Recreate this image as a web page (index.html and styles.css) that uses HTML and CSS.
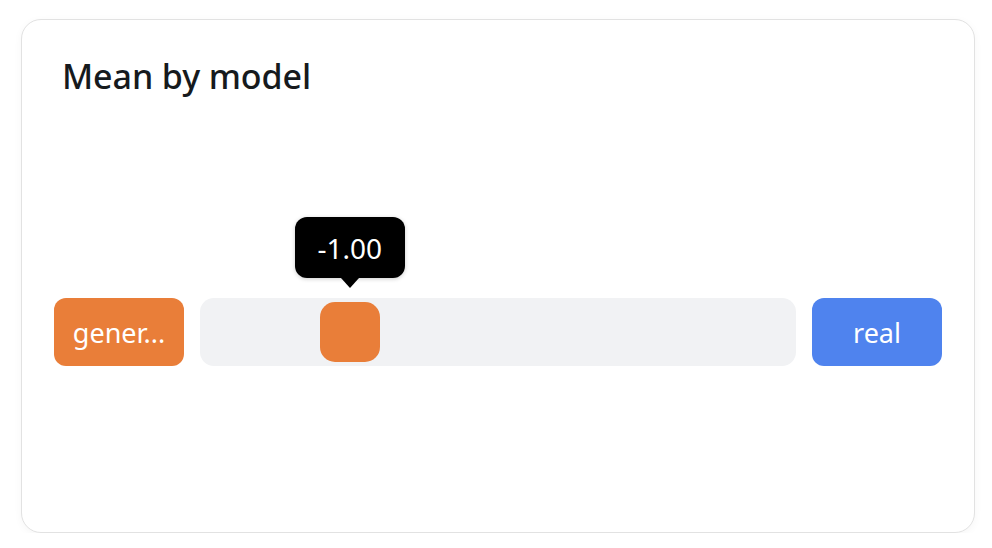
FILE: index.html
```html
<!DOCTYPE html>
<html lang="en">
<head>
    <meta charset="UTF-8">
    <meta name="viewport" content="width=device-width, initial-scale=1.0">
    <title>Mean by model</title>
    <link rel="stylesheet" href="styles.css">
</head>
<body>
    <div class="card">
        <h2 class="card-title">Mean by model</h2>

        <div class="chart">
            <div class="model-row">
                <div class="model-label generated" title="generated">gener...</div>
                <div class="slider-track">
                    <div class="slider-handle" style="left: 20.1%">
                        <div class="tooltip">-1.00</div>
                    </div>
                </div>
                <div class="model-label real">real</div>
            </div>
        </div>
    </div>
</body>
</html>
```

FILE: styles.css
```css
* {
    margin: 0;
    padding: 0;
    box-sizing: border-box;
    font-family: "Noto Sans", "Open Sans", sans-serif;
}

body {
    background-color: #ffffff;
    padding: 19px 17px 0 21px;
}

.card {
    height: 514px;
    background-color: #fff;
    border: 1.5px solid #e2e2e2;
    border-radius: 20px;
    box-shadow: 0 2px 8px rgba(0, 0, 0, 0.04);
    padding: 32px;
}

.card-title {
    font-size: 34px;
    font-weight: 500;
    line-height: 40px;
    color: #161a1d;
    padding: 4px 0 0 8px;
    letter-spacing: -0.1px;
}

.chart {
    padding-top: 202px;
}

.model-row {
    display: flex;
    gap: 16px;
    height: 68px;
}

.model-label {
    flex: 0 0 130px;
    border-radius: 12px;
    color: #fff;
    font-size: 27px;
    display: flex;
    align-items: center;
    justify-content: center;
    white-space: nowrap;
}

.model-label.generated {
    background-color: #e97e39;
}

.model-label.real {
    background-color: #4f83ee;
}

.slider-track {
    flex: 1;
    position: relative;
    background-color: #f1f2f4;
    border-radius: 14px;
}

.slider-handle {
    position: absolute;
    top: 4px;
    width: 60px;
    height: 60px;
    background-color: #e97e39;
    border-radius: 15px;
}

.tooltip {
    position: absolute;
    bottom: 84px;
    left: 50%;
    transform: translateX(-50%);
    width: 110px;
    height: 61px;
    background-color: #000;
    color: #fff;
    border-radius: 12px;
    font-size: 28px;
    display: flex;
    align-items: center;
    justify-content: center;
    box-shadow: 0 1px 4px rgba(0, 0, 0, 0.2);
}

.tooltip::after {
    content: "";
    position: absolute;
    top: 100%;
    left: 50%;
    margin-left: -9px;
    border-left: 9px solid transparent;
    border-right: 9px solid transparent;
    border-top: 10px solid #000;
}
```
